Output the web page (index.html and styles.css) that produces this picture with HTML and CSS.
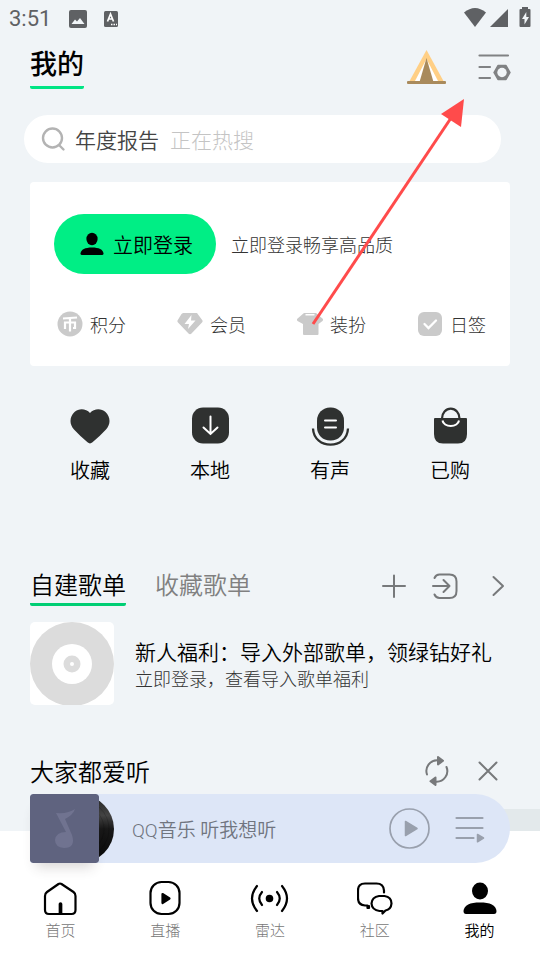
FILE: index.html
```html
<!DOCTYPE html>
<html lang="zh-CN">
<head>
<meta charset="utf-8">
<meta name="viewport" content="width=device-width, initial-scale=1">
<title>我的</title>
<link rel="stylesheet" href="styles.css">
</head>
<body>
<div class="app">
  <main class="content">
    <div class="status">
      <span class="clock">3:51</span>
      <svg class="status-app" width="18" height="18" viewBox="0 0 18 18"><rect width="18" height="18" rx="2" fill="#5f6164"/><path d="M2.500 14 6 9.500 8 11.500 11 8 15.500 14Z" fill="#f1f5f8"/></svg>
      <svg width="16" height="18" viewBox="0 0 16 18"><rect x="1" y="1" width="14" height="16" rx="1.500" fill="#5f6164"/><path d="M4.500 11.500 7.500 4 10.500 11.500M5.500 9H9.500" fill="none" stroke="#fff" stroke-width="1.700"/><path d="M8 14.500h1.500M10.500 14.500H12M13 14.500h1" stroke="#fff" stroke-width="1.300"/></svg>
      <svg class="status-right" width="68" height="22" viewBox="0 0 68 22"><path d="M0 5.500Q11-3.500 22 5.500L11 20Z" fill="#5f6164"/><path d="M44 2V20H26Z" fill="#5f6164"/><path d="M58 2V0h6v2h1.500q1 0 1 1V19q0 1-1 1h-9q-1 0-1-1V3q0-1 1-1Z" fill="#5f6164"/><path d="M62.300 5 58 12h2.500v5.500L65 10h-2.700Z" fill="#f1f5f8"/></svg>
    </div>

    <header class="header">
      <h1 class="title">我的</h1>
      <div class="header-tools">
        <button type="button" aria-label="露营">
          <svg width="40" height="36" viewBox="0 0 40 36"><path d="M20.500 0 38 32H3Z" fill="#ffcf85"/><path d="M20.500 9 32 31H9Z" fill="#fff"/><path d="M20.500 8 27.500 32h-14Z" fill="#a98a5c"/><rect x="1" y="31" width="39" height="3" rx="1" fill="#a98a5c"/></svg>
        </button>
        <button type="button" aria-label="设置">
          <svg width="36" height="32" viewBox="0 0 36 32" fill="none" stroke="#808284" stroke-width="2.200" stroke-linecap="round"><path d="M3.500 3.500H32M3.500 15H14M3.500 26H14"/><path d="M22 13.500h8l4 7-4 7h-8l-4-7Z" fill="#808284" stroke-width="1.500" stroke-linejoin="round"/><circle cx="26" cy="20.500" r="4.700" fill="#f1f5f8" stroke="none"/></svg>
        </button>
      </div>
    </header>

    <form class="search">
      <svg width="26" height="26" viewBox="0 0 26 26" fill="none" stroke="#b3b3b3" stroke-width="2.400" stroke-linecap="round"><circle cx="12.500" cy="12" r="9.500"/><path d="M19.500 19.500 23.500 23.500"/></svg>
      <label for="q">年度报告</label>
      <input id="q" type="text" placeholder="正在热搜">
    </form>

    <section class="card">
      <div class="login-row">
        <button type="button" class="login">
          <svg width="26" height="26" viewBox="0 0 26 26"><ellipse cx="13" cy="8" rx="5.600" ry="6.200"/><path d="M1.500 22.500C2 18.500 6 16.500 13 16.500S24 18.500 24.500 22.500Q24.500 24 23 24H3Q1.500 24 1.500 22.500Z"/></svg>
          立即登录
        </button>
        <p class="login-note">立即登录畅享高品质</p>
      </div>
      <nav class="features">
        <a href="#"><svg width="26" height="26" viewBox="0 0 26 26"><circle cx="13" cy="13" r="12.500" fill="#cacaca"/><path d="M6 7.500 20 6.500M13 8V20.500M8 18V11.500H18V17H16" fill="none" stroke="#fff" stroke-width="2.200"/></svg>积分</a>
        <a href="#"><svg width="26" height="26" viewBox="0 0 26 26"><path d="M6 2H20L25.500 9.500Q26 10.500 25 11.500L14.500 22.500Q13 24 11.500 22.500L1 11.500Q0 10.500.5 9.500L4.500 3Z" fill="#cacaca"/><path d="M14.500 4 7.500 13h4.500L11 18l7.500-8.500H14Z" fill="#fff"/></svg>会员</a>
        <a href="#"><svg width="26" height="26" viewBox="0 0 26 26"><path d="M7 2H19L26 8Q26.500 9 25.500 10L21.500 13V23q0 1-1 1H7q-1 0-1-1V13L.5 10Q-.5 9 0 8Z" fill="#cacaca"/><path d="M8.500 3H17.500V4.500H8.500Z" fill="#fff"/></svg>装扮</a>
        <a href="#"><svg width="26" height="26" viewBox="0 0 26 26"><rect x="1" y="1" width="24" height="24" rx="6" fill="#cacaca"/><path d="M7.500 13 11.500 17 19 9.500" fill="none" stroke="#fff" stroke-width="2.300" stroke-linecap="round"/></svg>日签</a>
      </nav>
    </section>

    <nav class="shortcuts">
      <a href="#"><svg width="40" height="40" viewBox="0 0 40 40"><path d="M20 7C24 2.500 31 2 35.500 6 40.500 11 41 18 36 23.500Q30 30 22.500 36.300Q20 38.500 17.500 36.300Q10 30 4 23.500C-1 18-.5 11 4.500 6 9 2 16 2.500 20 7Z" fill="#2f3130"/></svg>收藏</a>
      <a href="#"><svg width="40" height="40" viewBox="0 0 40 40"><rect x="2" y="1.500" width="37" height="36" rx="11" fill="#2f3130"/><path d="M20.500 10.500V27.500M13.500 21.500 20.500 28 27.500 21.500" fill="none" stroke="#fff" stroke-width="2" stroke-linecap="round"/></svg>本地</a>
      <a href="#"><svg width="40" height="40" viewBox="0 0 40 40"><rect x="7" y="1.500" width="27" height="33" rx="13" fill="#2f3130"/><path d="M15 14.500H26M15 21.500H26" stroke="#fff" stroke-width="2" stroke-linecap="round"/><path d="M3 22.500C4 44 37 44 38 22.500" fill="none" stroke="#2f3130" stroke-width="2.300"/></svg>有声</a>
      <a href="#"><svg width="40" height="40" viewBox="0 0 40 40"><path d="M4 13q0-1 1-1H36q1 0 1 1V28q0 9.500-9 9.500H13q-9 0-9-9.500Z" fill="#2f3130"/><path d="M12 12.500A8.500 9.500 0 0 1 29.500 12.500" fill="none" stroke="#2f3130" stroke-width="2.200"/><path d="M12.500 14.500A8.300 6.300 0 0 0 29 14.500" fill="none" stroke="#fff" stroke-width="2"/></svg>已购</a>
    </nav>

    <section class="playlists">
      <div class="tabs">
        <button type="button" class="tab tab-active">自建歌单</button>
        <button type="button" class="tab">收藏歌单</button>
        <div class="tab-tools">
          <button type="button" aria-label="新建"><svg width="26" height="26" viewBox="0 0 26 26"><path d="M14 2.500V24M3 13H25"/></svg></button>
          <button type="button" aria-label="导入"><svg width="26" height="26" viewBox="0 0 26 26"><path d="M2.500 5Q4 1.500 7.500 1.500H17.500Q24.500 1.500 24.500 8.500V18Q24.500 25 17.500 25H7.500Q4 25 2.500 21.500M1 13H17.500M11.500 7 17.500 13 11.500 19"/></svg></button>
          <button type="button" aria-label="更多"><svg width="26" height="26" viewBox="0 0 26 26"><path d="M9.500 4 19 13 9.500 22"/></svg></button>
        </div>
      </div>
      <a href="#" class="playlist">
        <svg class="disc" width="84" height="83" viewBox="0 0 84 83"><rect width="84" height="83" fill="#fff"/><circle cx="42" cy="42" r="42" fill="#dcdcdc"/><circle cx="42" cy="42" r="20" fill="#fff"/><circle cx="42" cy="42" r="8.500" fill="#dcdcdc"/><circle cx="42" cy="42" r="2" fill="#fff"/></svg>
        <span class="playlist-text">
          <strong>新人福利：导入外部歌单，领绿钻好礼</strong>
          <span>立即登录，查看导入歌单福利</span>
        </span>
      </a>
    </section>

    <section class="popular">
      <h2>大家都爱听</h2>
      <button type="button" aria-label="刷新"><svg width="28" height="30" viewBox="0 0 28 30"><path d="M4 18.500A10.700 10.700 0 0 1 14.500 4.300M23.500 11A10.700 10.700 0 0 1 13 25.700"/><path d="M15 1 20 4.800 15 8.500ZM12.500 21.500 7.500 25.300 12.500 29Z" fill="#77797b"/></svg></button>
      <button type="button" aria-label="关闭"><svg width="28" height="30" viewBox="0 0 28 30"><path d="M5.500 6.500 22.500 23.500M22.500 6.500 5.500 23.500"/></svg></button>
    </section>
    <div class="peek"></div>
  </main>

  <footer class="dock">
    <div class="player">
      <div class="cover">
        <svg class="vinyl" width="68" height="68" viewBox="0 0 68 68"><defs><linearGradient id="v" x1="0" y1="0" x2="0" y2="1"><stop offset="0" stop-color="#222"/><stop offset=".3" stop-color="#444"/><stop offset=".5" stop-color="#181818"/><stop offset="1" stop-color="#080808"/></linearGradient></defs><circle cx="34" cy="34" r="34" fill="url(#v)"/><circle cx="34" cy="34" r="29" fill="none" stroke="#000" stroke-opacity=".15"/><circle cx="34" cy="34" r="24" fill="none" stroke="#000" stroke-opacity=".15"/></svg>
        <svg class="sleeve" width="69" height="69" viewBox="0 0 69 69"><rect width="69" height="69" rx="3" fill="#5f637f"/><path d="M26 19Q38 20 45 15Q43 21 35 25L42 41Q46 54 34 54Q25 53 25 46Q26 38 36 38Z" fill="#707390"/></svg>
      </div>
      <span class="track">QQ音乐 听我想听</span>
      <button type="button" aria-label="播放"><svg width="42" height="42" viewBox="0 0 42 42"><circle cx="21.500" cy="20.500" r="19.500" fill="none" stroke="#99a0ad" stroke-width="1.700"/><path d="M17.500 13.500 29 20.500 17.500 27.500Z" fill="#99a0ad" stroke="#99a0ad" stroke-width="1.500" stroke-linejoin="round"/></svg></button>
      <button type="button" aria-label="播放列表"><svg width="32" height="30" viewBox="0 0 32 30"><path d="M2.500 4H28.500M2.500 14H28.500M2.500 24H19.500" stroke="#99a0ad" stroke-width="2.200" stroke-linecap="round"/><path d="M23.500 20.500 29.500 24 23.500 27.800Z" fill="#99a0ad" stroke="#99a0ad" stroke-width="1.500" stroke-linejoin="round"/></svg></button>
    </div>
    <nav class="nav">
      <a href="#"><svg width="36" height="36" viewBox="0 0 36 36"><path d="M16.500 4Q18 3 19.500 4L31.500 12Q33.500 13.500 33.500 16V30Q33.500 34 29.500 34H7Q3 34 3 30V16Q3 13.500 5 12Z"/><path d="M18.500 24V33" stroke-width="3.700"/></svg>首页</a>
      <a href="#"><svg width="36" height="36" viewBox="0 0 36 36"><rect x="3.500" y="2" width="29" height="32" rx="11"/><path d="M15.500 14 22.500 18.500 15.500 23Z" fill="#000"/></svg>直播</a>
      <a href="#"><svg width="40" height="36" viewBox="0 0 40 36"><circle cx="19.500" cy="18.500" r="2.700" fill="#000"/><path d="M7 6Q-3 18.500 7 31M12 12Q6.500 18.500 12 25M27 12Q32.500 18.500 27 25M32 6Q42 18.500 32 31"/></svg>雷达</a>
      <a href="#"><svg width="36" height="36" viewBox="0 0 36 36"><path d="M27 12.500V10.500Q26.500 3.500 19.500 3.500H8Q1 3.500 1 10.500V18Q1 25 8 25.500H10.500V28H12V26"/><path d="M22 16H27.500Q34.500 17 34.500 23.500Q34 29.500 28.500 30.500L25.500 33.500V31H22.500Q15 30 14.500 23.500Q15 17 22 16Z"/></svg>社区</a>
      <a href="#" class="nav-active"><svg width="36" height="36" viewBox="0 0 36 36"><g fill="#000" stroke="none"><ellipse cx="18" cy="11" rx="8" ry="8.500"/><path d="M1.500 31C2 25 8 22.500 18 22.500S34 25 34.500 31Q34.500 34 32 34H4Q1.500 34 1.500 31Z"/></g></svg>我的</a>
    </nav>
  </footer>

  <svg class="pointer" width="160" height="232" viewBox="0 0 160 232"><path d="M6 228 144 22" fill="none" stroke="#ff4b4b" stroke-width="3"/><path d="M157 3 134 18 154 31Z" fill="#ff4b4b"/></svg>
</div>
</body>
</html>
```

FILE: styles.css
```css
* {
  box-sizing: border-box;
}

body {
  margin: 0;
  background: #fff;
  color: #000;
  font-family: "Noto Sans CJK SC", sans-serif;
  font-weight: 350;
}

h1, h2, p {
  margin: 0;
}

a {
  color: inherit;
  text-decoration: none;
}

button {
  padding: 0;
  border: 0;
  background: none;
  color: inherit;
  font: inherit;
}

svg {
  display: block;
  flex: none;
}

.app {
  position: relative;
  display: flex;
  flex-direction: column;
  min-height: 100vh;
}

.content {
  background: #f0f4f7;
}

.status {
  display: flex;
  align-items: center;
  height: 37px;
  padding: 0 8px 0 9px;
}

.clock {
  width: 60px;
  color: #5f6164;
  font-family: Roboto, sans-serif;
  font-size: 22px;
  font-weight: 400;
  line-height: 24px;
}

.status-app {
  margin-right: 16px;
}

.status-right {
  margin: 0 0 2px auto;
}

.header {
  display: flex;
  align-items: center;
  justify-content: space-between;
  padding: 9px 28px 0 30px;
}

.title {
  padding-bottom: 6px;
  border-bottom: 3px solid #00e584;
  border-radius: 2px;
  font-size: 27px;
  font-weight: 500;
  line-height: 34px;
}

.header-tools {
  display: flex;
  align-items: center;
  gap: 30px;
}

.search {
  display: flex;
  align-items: center;
  height: 48px;
  margin: 26px 39px 0 24px;
  padding: 0 16px;
  border-radius: 24px;
  background: #fff;
  font-size: 21px;
}

.search label {
  margin: 0 11px 0 9px;
  color: #444;
}

.search input {
  flex: 1;
  min-width: 0;
  padding: 0;
  border: 0;
  outline: 0;
  background: none;
  font: inherit;
  font-weight: 300;
}

.search input::placeholder {
  color: #c4c4c4;
  opacity: 1;
}

.card {
  margin: 19px 30px 0;
  padding: 32px 0 28px;
  border-radius: 4px;
  background: #fff;
}

.login-row {
  display: flex;
  align-items: center;
  gap: 15px;
  padding: 0 24px;
}

.login {
  display: flex;
  align-items: center;
  gap: 8px;
  height: 60px;
  padding: 0 23px 0 25px;
  border-radius: 30px;
  background: #00ee85;
  font-size: 20px;
}

.login-note {
  color: #333;
  font-size: 18px;
  font-weight: 300;
}

.features {
  display: grid;
  grid-template-columns: repeat(4, 1fr);
  margin-top: 36px;
  color: #333;
  font-size: 18px;
  font-weight: 300;
  line-height: 28px;
}

.features a {
  display: flex;
  align-items: center;
  gap: 7px;
  padding-left: 27px;
}

.shortcuts {
  display: grid;
  grid-template-columns: repeat(4, 1fr);
  padding: 40px 30px 0;
  font-size: 20px;
  line-height: 24px;
}

.shortcuts a,
.nav a {
  display: flex;
  flex-direction: column;
  align-items: center;
}

.shortcuts a {
  gap: 12px;
}

.playlists {
  padding: 87px 30px 0;
}

.tabs {
  display: flex;
  gap: 29px;
}

.tab {
  padding-bottom: 4px;
  border-bottom: 3px solid transparent;
  border-radius: 2px;
  color: #808080;
  font-size: 24px;
  line-height: 30px;
}

.tab-active {
  border-color: #00ce74;
  color: #000;
}

.tab-tools {
  display: flex;
  align-items: center;
  gap: 26px;
  margin-left: auto;
  padding-bottom: 3px;
}

.tab-tools svg,
.popular svg {
  fill: none;
  stroke: #77797b;
  stroke-width: 2;
  stroke-linecap: round;
  stroke-linejoin: round;
}

.playlist {
  display: flex;
  align-items: center;
  gap: 21px;
  margin-top: 16px;
}

.disc {
  border-radius: 5px;
}

.playlist-text {
  display: flex;
  flex-direction: column;
  color: #333;
  font-size: 18px;
  font-weight: 300;
  line-height: 26px;
}

.playlist-text strong {
  color: #000;
  font-size: 21px;
  font-weight: 350;
  line-height: 28px;
}

.popular {
  display: flex;
  align-items: center;
  gap: 23px;
  margin-top: 50px;
  padding: 0 38px 0 30px;
}

.popular h2 {
  margin-right: auto;
  font-size: 24px;
  font-weight: inherit;
  line-height: 32px;
}

.peek {
  height: 22px;
  margin: 22px 0 0 50%;
  background: #e3e9eb;
}

.dock {
  background: #fff;
}

.player {
  position: relative;
  display: flex;
  align-items: center;
  gap: 24px;
  margin: -37px 30px 0;
  padding-right: 24px;
  border-radius: 3px 35px 35px 3px;
  background: #dde6f7;
}

.cover {
  position: relative;
  width: 78px;
}

.sleeve {
  position: relative;
  border-radius: 3px;
  box-shadow: 0 10px 12px -6px rgba(60, 50, 50, 0.2);
}

.vinyl {
  position: absolute;
  top: 1px;
  left: 16px;
}

.track {
  margin-right: auto;
  color: #70757f;
  font-family: Roboto, "Noto Sans CJK SC", sans-serif;
  font-size: 19px;
}

.nav {
  display: grid;
  grid-template-columns: repeat(5, 1fr);
  padding: 17px 8px 20px;
  color: #777;
  font-size: 15px;
  font-weight: 300;
  line-height: 20px;
}

.nav a {
  gap: 4px;
}

.nav svg {
  fill: none;
  stroke: #000;
  stroke-width: 2.2;
  stroke-linecap: round;
  stroke-linejoin: round;
}

.nav .nav-active {
  color: #000;
  font-weight: 350;
}

.pointer {
  position: absolute;
  top: 96px;
  left: 307px;
  pointer-events: none;
}
```
